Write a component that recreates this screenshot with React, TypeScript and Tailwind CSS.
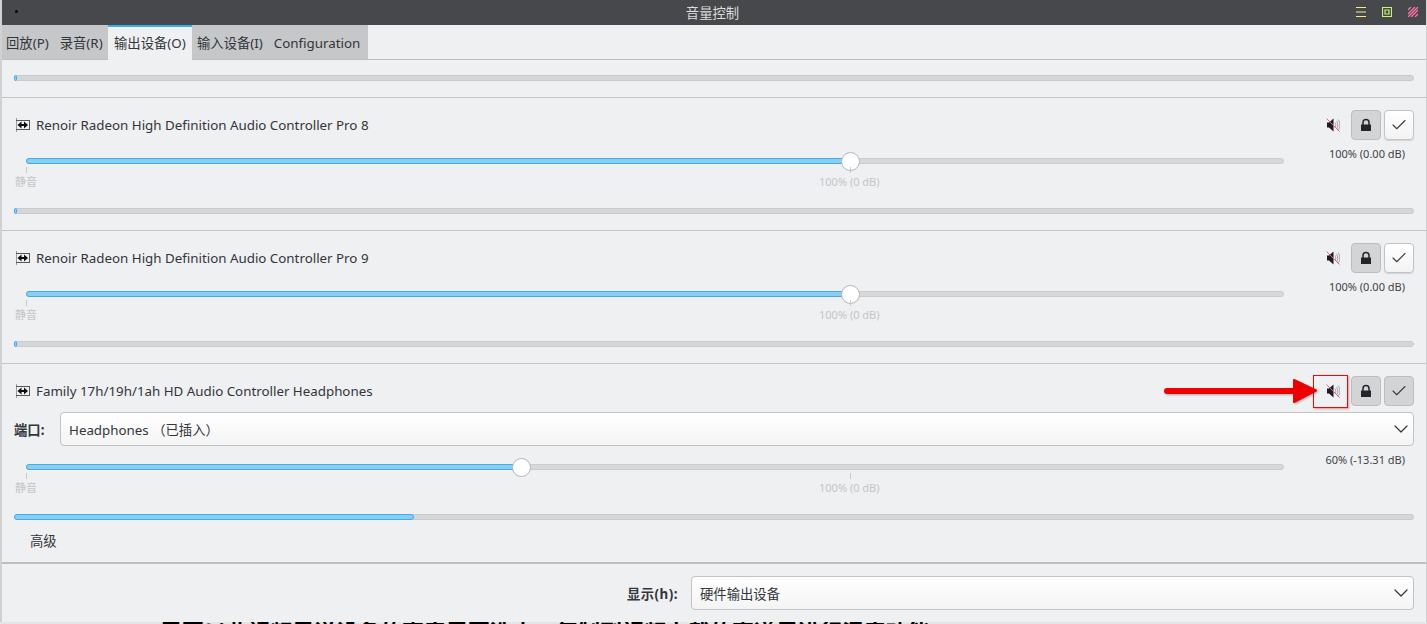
import React from 'react';
import { ChevronDown, Check } from 'lucide-react';

const SpeakerMuted = () => (
  <svg width="14" height="16" viewBox="0 0 14 16" className="block">
    <path d="M1 5.500h2L7.500 1.500v13L3 10.500H1z" fill="#1b1d1f" />
    <path d="M9 5.500c1 1.500 1 3.500 0 5M10.500 4c1.800 2.400 1.800 5.600 0 8M12 2.500c2.500 3.200 2.500 7.800 0 11" fill="none" stroke="#a3a5a8" strokeWidth="1" />
    <path d="M0.500 1.500l13 13" stroke="#f0607c" strokeWidth="1" />
  </svg>
);

const LockIcon = () => (
  <svg width="12" height="14" viewBox="0 0 12 14" className="block">
    <path d="M3 7V4.500a3 3 0 0 1 6 0V7" fill="none" stroke="#232629" strokeWidth="1.500" />
    <path d="M1 6.500h10V13H1z" fill="#232629" />
  </svg>
);

const CardIcon = () => (
  <svg width="15" height="14" viewBox="0 0 15 14" className="block">
    <path d="M1.500 0v14" stroke="#9a9b9d" strokeWidth="1" />
    <path d="M1 2.500h14M1 11.500h14M14.500 2v10" stroke="#55585b" strokeWidth="1" />
    <path d="M2.500 7l4-3.500v7zM13 7L9 3.500v7z" fill="#0c0e10" />
    <path d="M6 7h3" stroke="#0c0e10" strokeWidth="2" />
  </svg>
);

const Meter = ({ percent }: { percent: number }) => (
  <div className="h-[6px] rounded-[3px] bg-[#d5d6d7] border border-[#c9cacb]">
    <div className="h-full bg-[#8ccdf2] border border-[#3daee9] -m-px box-content rounded-[3px]" style={{ width: `${percent}%` }} />
  </div>
);

const Slider = ({ percent }: { percent: number }) => (
  <div>
    <div className="relative ml-[12px] w-[1258px] h-[6px] rounded-[3px] bg-[#d7d8d9] border border-[#cbcccd]">
      <div className="h-full bg-[#8ccdf2] border border-[#3daee9] -m-px box-content rounded-l-[3px]" style={{ width: `${percent}%` }} />
      <div className="absolute top-[-7px] w-[19px] h-[19px] rounded-full bg-white border border-[#b5b6b8] -ml-[9.5px]" style={{ left: `${percent}%` }} />
    </div>
    <div className="relative h-[40px] text-[11px] leading-[14px] text-[#c4c5c6]">
      <div className="absolute left-[12px] top-[3px] w-px h-[6px] bg-[#c9cacb]" />
      <span className="absolute left-[1px] top-[11px]">静音</span>
      <div className="absolute left-[836px] top-[3px] w-px h-[6px] bg-[#c9cacb]" />
      <span className="absolute left-[805px] top-[11px]">100% (0 dB)</span>
    </div>
  </div>
);

const ActionButtons = ({ checked, highlighted }: { checked: boolean; highlighted?: boolean }) => (
  <div className="flex items-center">
    <div className={`w-[35px] h-[33px] flex items-center justify-center pl-[5px] border ${highlighted ? 'border-[#ff0000] shadow-[1px_1px_2px_rgba(150,0,0,0.35)]' : 'border-transparent'}`}>
      <SpeakerMuted />
    </div>
    <div className="ml-[3px] w-[30px] h-[30px] flex items-center justify-center rounded-[4px] bg-[#d3d4d5] border border-[#bcbdbf]">
      <LockIcon />
    </div>
    <div className={`ml-[3px] w-[30px] h-[30px] flex items-center justify-center rounded-[4px] border ${checked ? 'bg-[#d3d4d5] border-[#bcbdbf]' : 'bg-gradient-to-b from-white to-[#f3f3f4] border-[#c2c3c5] shadow-[0_1px_1px_rgba(0,0,0,0.12)]'}`}>
      <Check size={18} stroke="#3a3d40" strokeWidth={1.5} />
    </div>
  </div>
);

const Device = ({ name, checked, percent, volume, meter, port, last }: { name: string; checked: boolean; percent: number; volume: string; meter: number; port?: boolean; last?: boolean }) => (
  <div className={`px-[12px] ${last ? '' : 'border-b border-[#c4c5c6]'}`}>
    <div className="flex items-center justify-between h-[34px] mt-[10px]">
      <div className="flex items-center gap-[6px] pl-[1px]">
        <CardIcon />
        <span>{name}</span>
      </div>
      <ActionButtons checked={checked} highlighted={last} />
    </div>
    {port && (
      <div className="flex items-center mt-[4px] h-[34px]">
        <span className="font-bold w-[46px] pt-[1px]">端口:</span>
        <div className="flex-1 h-[34px] flex items-center justify-between pl-[8px] rounded-[4px] bg-gradient-to-b from-white to-[#f4f4f5] border border-[#c2c3c5]">
          <span className="pt-[1px]">Headphones （已插入）</span>
          <ChevronDown size={24} stroke="#31363b" strokeWidth={1.2} />
        </div>
      </div>
    )}
    <div className={`relative ${port ? 'mt-[18px]' : 'mt-[16px]'}`}>
      <Slider percent={percent} />
      <span className="absolute right-[9px] top-[-11px] text-[11px] leading-[14px] text-[#3f4347]">{volume}</span>
    </div>
    <div className={last ? 'mt-[4px]' : 'mt-[4px] mb-[16px]'}>
      <Meter percent={meter} />
    </div>
  </div>
);

const App: React.FC = () => {
  return (
    <div className="relative w-[1427px] h-[624px] overflow-hidden bg-[#e4e5e6] text-[13.33px] leading-[18px] text-[#31363b] font-['Noto_Sans','Noto_Sans_CJK_SC',sans-serif]">
      <div className="h-[622px] bg-[#eff0f1] border-l-2 border-r border-[#d0d1d2] flex flex-col">
        <div className="relative h-[25px] shrink-0 bg-[#47484c] flex items-center justify-center pr-[3px] text-[#dcdcdc]">
          <div className="absolute left-[13px] top-[10px] w-[3px] h-[3px] rounded-full bg-black" />
          <span>音量控制</span>
          <div className="absolute right-[8px] top-[7px] flex items-center gap-[16px]">
            <svg width="10" height="10" viewBox="0 0 10 10" className="block"><path d="M0 .5h10M0 5h10M0 9.500h10" stroke="#ffe680" strokeWidth="1" /></svg>
            <svg width="10" height="10" viewBox="0 0 10 10" className="block"><path d="M.5.500h9v9h-9zM3 3h4v4H3z" fill="none" stroke="#c2f56b" strokeWidth="1.200" /></svg>
            <svg width="10" height="10" viewBox="0 0 10 10" className="block"><path d="M0 3l3-3M0 7l7-7M0 10L10 0M3 10l7-7M7 10l3-3" stroke="#ff6fa8" strokeWidth="1.300" /></svg>
          </div>
        </div>
        <div className="flex h-[35px] shrink-0 border-b border-[#bdbec0] items-stretch">
          <div className="flex bg-[#c6c7c8] w-[106px]">
            <span className="pl-[4px] pt-[9px]">回放(P)</span>
            <span className="pl-[11px] pt-[9px]">录音(R)</span>
          </div>
          <div className="bg-[#eff0f1] border-t-2 border-[#3daee9] -mb-px pl-[6px] pt-[7px] w-[84px]">输出设备(O)</div>
          <div className="flex bg-[#c6c7c8] w-[176px]">
            <span className="pl-[5px] pt-[9px]">输入设备(I)</span>
            <span className="pl-[11px] pt-[9px]">Configuration</span>
          </div>
        </div>
        <div className="px-[12px] pt-[15px] pb-[16px] border-b border-[#c4c5c6]">
          <Meter percent={0.1} />
        </div>
        <Device name="Renoir Radeon High Definition Audio Controller Pro 8" checked={false} percent={65.56} volume="100% (0.00 dB)" meter={0.1} />
        <Device name="Renoir Radeon High Definition Audio Controller Pro 9" checked={false} percent={65.56} volume="100% (0.00 dB)" meter={0.1} />
        <Device name="Family 17h/19h/1ah HD Audio Controller Headphones" checked percent={39.4} volume="60% (-13.31 dB)" meter={28.5} port last />
        <div className="pl-[28px] mt-[12px] mb-[12px] h-[18px]">高级</div>
        <div className="flex-1 border-t-2 border-[#bdbec0] flex items-start justify-end pr-[12px] pt-[12px]">
          <span className="font-bold mr-[13px] leading-[36px] tracking-[0.5px]">显示(h):</span>
          <div className="w-[723px] h-[34px] flex items-center justify-between pl-[8px] rounded-[4px] bg-gradient-to-b from-white to-[#f4f4f5] border border-[#c2c3c5]">
            <span className="pt-[1px]">硬件输出设备</span>
            <ChevronDown size={24} stroke="#31363b" strokeWidth={1.2} />
          </div>
        </div>
      </div>
      <div className="h-[2px] overflow-hidden pl-[160px] text-[22px] leading-[24px] font-bold text-black whitespace-nowrap">
        <div className="-mt-[3px]">需要以此视频里说设备的声音需要选中，复制到视频上载的声道里进行混音功能</div>
      </div>
      <svg className="absolute left-[1164px] top-[378px] drop-shadow-[1px_1px_1px_rgba(0,0,0,0.3)]" width="156" height="26" viewBox="0 0 156 26">
        <path d="M3 13h130" stroke="#ee0000" strokeWidth="6" strokeLinecap="round" />
        <path d="M130 2L152 12.500 130 24z" fill="#ee0000" stroke="#ee0000" strokeWidth="2" strokeLinejoin="round" />
      </svg>
    </div>
  );
};

export default App;
